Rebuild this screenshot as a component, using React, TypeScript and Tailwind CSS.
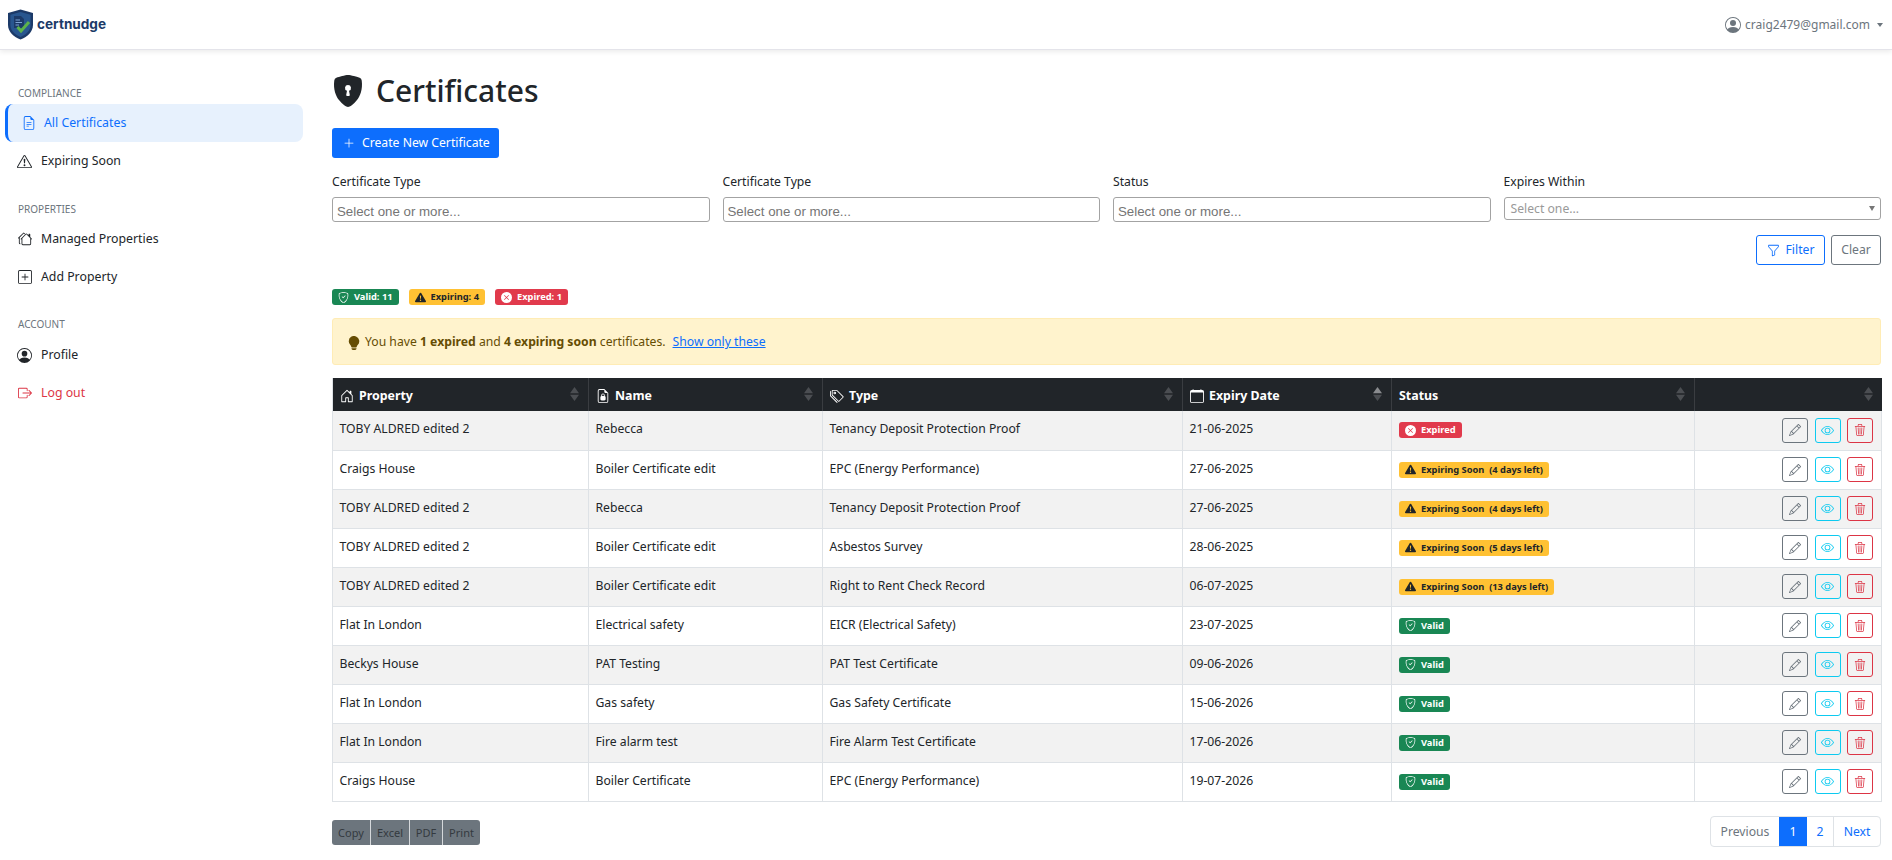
import React from "react";
import {
  BsFileEarmarkText, BsExclamationTriangle, BsHouses, BsPlusSquare, BsPersonCircle, BsBoxArrowRight,
  BsShieldLockFill, BsPlusLg, BsFunnel, BsShieldCheck, BsExclamationTriangleFill, BsXCircleFill,
  BsLightbulbFill, BsHouseDoor, BsFileEarmarkLock2, BsTags, BsCalendar, BsPencil, BsEye, BsTrash3,
} from "react-icons/bs";

const sans = "font-['Noto_Sans','Open_Sans',sans-serif]";

function Logo() {
  return (
    <svg width="27" height="31" viewBox="0 0 27 31" className="shrink-0">
      <path d="M13.5 0.5 L26 4 V16 C26 23 20 28 13.5 30.5 C7 28 1 23 1 16 V4 Z" fill="#1c3a68" />
      <path d="M13.5 3 L23.6 5.8 V16 C23.6 21.8 18.8 25.8 13.5 28 C8.2 25.8 3.4 21.8 3.4 16 V5.8 Z" fill="#28568f" />
      <path d="M7 7 H14 L17 10 V19 H7 Z" fill="#1c3a68" />
      <path d="M8.5 11 H13 M8.5 13.5 H15 M8.5 16 H12" stroke="#7fa6d6" strokeWidth="1" />
      <path d="M10.5 18 L14 22 L22 13" fill="none" stroke="#5cb24a" strokeWidth="3" />
    </svg>
  );
}

function NavItem({ icon, label, active, danger }: { icon: React.ReactNode; label: string; active?: boolean; danger?: boolean }) {
  if (active) {
    return (
      <div className="flex items-center h-[38px] mb-[-1px] ml-[5px] w-[298px] h-[37px] rounded-[8px] bg-[#e7f1fd] border-l-[3px] border-[#0d6efd] text-[#0d6efd] pl-[14px] gap-[8px]">
        <span className="w-[14px] flex justify-center">{icon}</span>
        <span className="pt-[1px]">{label}</span>
      </div>
    );
  }
  return (
    <div className={`flex items-center h-[38px] pl-[17px] gap-[9px] ${danger ? "text-[#dc3545]" : "text-[#212529]"}`}>
      <span className="w-[15px] flex justify-center">{icon}</span>
      <span className="pt-[1px]">{label}</span>
    </div>
  );
}

function NavLabel({ children }: { children: React.ReactNode }) {
  return <div className="pl-[18px] text-[10px] leading-[14px] text-[#6c757d] uppercase">{children}</div>;
}

function Sorter({ first }: { first?: boolean }) {
  return (
    <svg width="9" height="14" viewBox="0 0 9 14" className="absolute right-[9px] top-[9px]">
      <path d="M4.5 0 L9 6.3 H0 Z" fill={first ? "#8a8c8f" : "#4b4e52"} />
      <path d="M4.5 14 L9 7.7 H0 Z" fill="#4b4e52" />
    </svg>
  );
}

function Th({ icon, label, first, border = true }: { icon?: React.ReactNode; label?: string; first?: boolean; border?: boolean }) {
  return (
    <th className={`relative h-[33px] p-0 pl-[7px] text-left font-bold text-white text-[12.4px] ${border ? "border-r border-[#3a3d41]" : ""}`}>
      <span className="flex items-center gap-[5px] pt-[3px]">
        {icon}
        {label}
      </span>
      <Sorter first={first} />
    </th>
  );
}

function Badge({ kind, children }: { kind: "valid" | "warn" | "bad"; children: React.ReactNode }) {
  const cls =
    kind === "valid"
      ? "bg-[#198754] text-white"
      : kind === "warn"
      ? "bg-[#ffc133] text-[#212529]"
      : "bg-[#e13a4c] text-white";
  const icon =
    kind === "valid" ? (
      <BsShieldCheck size={11} />
    ) : kind === "warn" ? (
      <BsExclamationTriangleFill size={11} />
    ) : (
      <BsXCircleFill size={11} />
    );
  return (
    <span className={`inline-flex items-center h-[16px] px-[6px] gap-[5px] rounded-[3px] text-[9.3px] font-bold whitespace-pre ${cls}`}>
      {icon}
      {children}
    </span>
  );
}

type Row = { p: string; n: string; t: string; d: string; s: "bad" | "valid" | number };

const rows: Row[] = [
  { p: "TOBY ALDRED edited 2", n: "Rebecca", t: "Tenancy Deposit Protection Proof", d: "21-06-2025", s: "bad" },
  { p: "Craigs House", n: "Boiler Certificate edit", t: "EPC (Energy Performance)", d: "27-06-2025", s: 4 },
  { p: "TOBY ALDRED edited 2", n: "Rebecca", t: "Tenancy Deposit Protection Proof", d: "27-06-2025", s: 4 },
  { p: "TOBY ALDRED edited 2", n: "Boiler Certificate edit", t: "Asbestos Survey", d: "28-06-2025", s: 5 },
  { p: "TOBY ALDRED edited 2", n: "Boiler Certificate edit", t: "Right to Rent Check Record", d: "06-07-2025", s: 13 },
  { p: "Flat In London", n: "Electrical safety", t: "EICR (Electrical Safety)", d: "23-07-2025", s: "valid" },
  { p: "Beckys House", n: "PAT Testing", t: "PAT Test Certificate", d: "09-06-2026", s: "valid" },
  { p: "Flat In London", n: "Gas safety", t: "Gas Safety Certificate", d: "15-06-2026", s: "valid" },
  { p: "Flat In London", n: "Fire alarm test", t: "Fire Alarm Test Certificate", d: "17-06-2026", s: "valid" },
  { p: "Craigs House", n: "Boiler Certificate", t: "EPC (Energy Performance)", d: "19-07-2026", s: "valid" },
];

function Td({ children }: { children: React.ReactNode }) {
  return <td className="p-0 pl-[6.5px] pt-[8px] align-top border-r border-b border-[#dee2e6] leading-[20px]">{children}</td>;
}

function ActionBtn({ cls, children }: { cls: string; children: React.ReactNode }) {
  return <span className={`flex items-center justify-center w-[26px] h-[25px] border rounded-[3px] ${cls}`}>{children}</span>;
}

function Field({ label, children }: { label: string; children: React.ReactNode }) {
  return (
    <div>
      <div className="h-[26px] leading-[22px] text-[#212529]">{label}</div>
      {children}
    </div>
  );
}

function Multi() {
  return (
    <div className="h-[25px] border border-[#a3a3a3] rounded-[3px] pl-[4px] font-['Liberation_Sans',sans-serif] text-[13.3px] leading-[28px] text-[#757575]">
      Select one or more...
    </div>
  );
}

export default function App() {
  return (
    <div className={`${sans} w-[1892px] h-[860px] overflow-hidden bg-white text-[12.2px] text-[#212529]`}>
      <header className="h-[50px] flex items-center justify-between bg-white border-b border-[#e4e4ea] shadow-[0_2px_5px_rgba(0,0,0,0.08)] pl-[7px] pr-[9px]">
        <div className="flex items-center gap-[3px]">
          <Logo />
          <span className="font-['Inter',sans-serif] font-bold text-[13.6px] text-[#1c3a68]">certnudge</span>
        </div>
        <div className="flex items-center text-[#6c757d] text-[12px]">
          <BsPersonCircle size={16} />
          <span className="ml-[4px]">craig2479@gmail.com</span>
          <span className="ml-[7px] w-0 h-0 border-x-[3.5px] border-x-transparent border-t-[4px] border-t-[#6c757d]" />
        </div>
      </header>
      <div className="flex">
        <aside className="w-[332px] shrink-0 pt-[36px] text-[12.3px]">
          <NavLabel>Compliance</NavLabel>
          <div className="mt-[4px] pb-[1px]">
            <NavItem active icon={<BsFileEarmarkText size={14} />} label="All Certificates" />
            <div className="pt-[1px]">
              <NavItem icon={<BsExclamationTriangle size={15} />} label="Expiring Soon" />
            </div>
          </div>
          <div className="mt-[21px]">
            <NavLabel>Properties</NavLabel>
          </div>
          <div className="mt-[4px]">
            <NavItem icon={<BsHouses size={14} />} label="Managed Properties" />
            <NavItem icon={<BsPlusSquare size={14} />} label="Add Property" />
          </div>
          <div className="mt-[21px]">
            <NavLabel>Account</NavLabel>
          </div>
          <div className="mt-[5px]">
            <NavItem icon={<BsPersonCircle size={15} />} label="Profile" />
            <NavItem danger icon={<BsBoxArrowRight size={14} />} label="Log out" />
          </div>
        </aside>
        <main className="w-[1549px] pt-[22px]">
          <div className="flex items-center h-[38px] gap-[12px]">
            <BsShieldLockFill size={32} className="text-[#212529]" />
            <h1 className="text-[30px] font-medium leading-[38px]">Certificates</h1>
          </div>
          <div className="mt-[18px] h-[30px] w-[167px] rounded-[3px] bg-[#0d6efd] text-white flex items-center pl-[11px] gap-[7px]">
            <BsPlusLg size={12} />
            <span>Create New Certificate</span>
          </div>
          <div className="mt-[13px] grid grid-cols-4 gap-x-[13px]">
            <Field label="Certificate Type"><Multi /></Field>
            <Field label="Certificate Type"><Multi /></Field>
            <Field label="Status"><Multi /></Field>
            <Field label="Expires Within">
              <div className="relative h-[23px] border border-[#a3a3a3] rounded-[3px] pl-[6px] leading-[21px] text-[#999]">
                Select one...
                <span className="absolute right-[5px] top-[8px] w-0 h-0 border-x-[3.5px] border-x-transparent border-t-[5px] border-t-[#777]" />
              </div>
            </Field>
          </div>
          <div className="mt-[13px] flex justify-end gap-[6px]">
            <span className="flex items-center justify-center gap-[6px] w-[69px] h-[30px] rounded-[3px] border border-[#0d6efd] text-[#0d6efd]">
              <BsFunnel size={13} /> Filter
            </span>
            <span className="flex items-center justify-center w-[50px] h-[30px] rounded-[3px] border border-[#6c757d] text-[#6c757d]">Clear</span>
          </div>
          <div className="mt-[24px] flex gap-[10px]">
            <Badge kind="valid">Valid: 11</Badge>
            <Badge kind="warn">Expiring: 4</Badge>
            <Badge kind="bad">Expired: 1</Badge>
          </div>
          <div className="mt-[13px] h-[47px] flex items-center pl-[14px] pt-[2px] rounded-[3px] border border-[#ffecb5] bg-[#fff3cd] text-[#664d03]">
            <BsLightbulbFill size={14} />
            <span className="ml-[4px]">
              You have <b>1 expired</b> and <b>4 expiring soon</b> certificates.
            </span>
            <span className="ml-[7px] text-[#0d6efd] underline">Show only these</span>
          </div>
          <table className="mt-[13px] w-full table-fixed border-collapse border-l border-[#dee2e6]">
            <colgroup>
              <col className="w-[256px]" />
              <col className="w-[234px]" />
              <col className="w-[360px]" />
              <col className="w-[209px]" />
              <col className="w-[303px]" />
              <col className="w-[187px]" />
            </colgroup>
            <thead>
              <tr className="bg-[#212529]">
                <Th icon={<BsHouseDoor size={14} />} label="Property" />
                <Th icon={<BsFileEarmarkLock2 size={14} />} label="Name" />
                <Th icon={<BsTags size={14} />} label="Type" />
                <Th icon={<BsCalendar size={14} />} label="Expiry Date" first />
                <Th label="Status" />
                <Th border={false} />
              </tr>
            </thead>
            <tbody>
              {rows.map((r, i) => (
                <tr key={i} className={`h-[39px] ${i % 2 === 0 ? "bg-[#f2f2f2]" : "bg-white"}`}>
                  <Td>{r.p}</Td>
                  <Td>{r.n}</Td>
                  <Td>{r.t}</Td>
                  <Td>{r.d}</Td>
                  <td className="p-0 pl-[7px] border-r border-b border-[#dee2e6]">
                    <div className="flex">
                      {r.s === "bad" ? (
                        <Badge kind="bad">Expired</Badge>
                      ) : r.s === "valid" ? (
                        <Badge kind="valid">Valid</Badge>
                      ) : (
                        <Badge kind="warn">{`Expiring Soon  (${r.s} days left)`}</Badge>
                      )}
                    </div>
                  </td>
                  <td className="p-0 pr-[8px] border-r border-b border-[#dee2e6]">
                    <div className="flex justify-end gap-[6.5px]">
                      <ActionBtn cls="border-[#6c757d] text-[#6c757d]"><BsPencil size={12} /></ActionBtn>
                      <ActionBtn cls="border-[#0dcaf0] text-[#0dcaf0]"><BsEye size={13} /></ActionBtn>
                      <ActionBtn cls="border-[#dc3545] text-[#dc3545]"><BsTrash3 size={12} /></ActionBtn>
                    </div>
                  </td>
                </tr>
              ))}
            </tbody>
          </table>
          <div className="flex justify-between mt-[14px]">
            <div className="mt-[4px] flex h-[25px] rounded-[3px] overflow-hidden bg-[#6c757d] text-[#343a40] text-[11px] leading-[25px]">
              <span className="w-[39px] text-center border-r border-[#d5d8db]">Copy</span>
              <span className="w-[39px] text-center border-r border-[#d5d8db]">Excel</span>
              <span className="w-[33px] text-center border-r border-[#d5d8db]">PDF</span>
              <span className="w-[37px] text-center">Print</span>
            </div>
            <div className="flex h-[31px] rounded-[4px] border border-[#dee2e6] leading-[29px] text-[#0d6efd]">
              <span className="w-[68px] text-center text-[#6c757d]">Previous</span>
              <span className="w-[28px] text-center bg-[#0d6efd] text-white">1</span>
              <span className="w-[27px] text-center border-r border-[#dee2e6]">2</span>
              <span className="w-[46px] text-center">Next</span>
            </div>
          </div>
        </main>
      </div>
    </div>
  );
}
